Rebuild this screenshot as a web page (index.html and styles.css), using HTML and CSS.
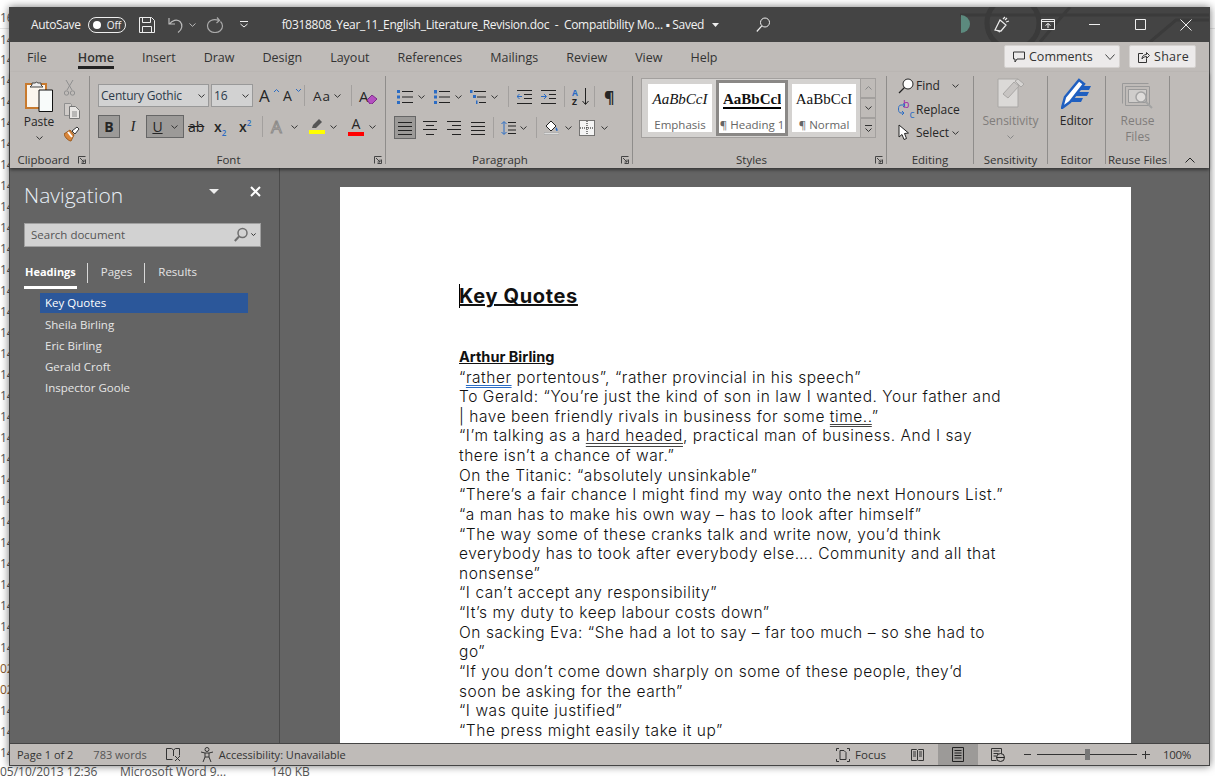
FILE: index.html
```html
<!DOCTYPE html>
<html lang="en">
<head>
    <meta charset="UTF-8">
    <title>f0318808_Year_11_English_Literature_Revision.doc - Word</title>
    <link rel="stylesheet" href="styles.css">
</head>
<body>
<svg class="defs" width="0" height="0">
    <symbol id="chev" viewBox="0 0 7 4"><path d="M.5.500 3.500 3.300 6.500.500" fill="none" stroke="#333" stroke-width="1"/></symbol>
    <symbol id="chev-lt" viewBox="0 0 7 4"><path d="M.5.500 3.500 3.300 6.500.500" fill="none" stroke="#bbb" stroke-width="1"/></symbol>
    <symbol id="launch" viewBox="0 0 8 8"><path d="M.5 7.500V.5h7M7.500 3.500v4h-4M2 2l4 4M6 3.500V6H3.500" fill="none" stroke="#444"/></symbol>
    <symbol id="lines" viewBox="0 0 14 14"><path d="M0 1.500h14M0 5.500h14M0 9.500h14M0 13.500h14" stroke="#222"/></symbol>
</svg>

<!-- the explorer window behind word -->
<div class="backdrop">
    <div class="file-dates">
        <div class="date">16</div><div class="date first">14</div><div class="date">14</div><div class="date">14</div><div class="date">14</div><div class="date">14</div>
        <div class="date">14</div><div class="date">14</div><div class="date">14</div><div class="date">14</div><div class="date">14</div><div class="date">14</div>
        <div class="date">14</div><div class="date">14</div><div class="date">14</div><div class="date">14</div><div class="date">14</div><div class="date">14</div>
        <div class="date">14</div><div class="date">14</div><div class="date">14</div><div class="date">14</div><div class="date">14</div><div class="date">14</div>
        <div class="date">14</div><div class="date">14</div><div class="date">14</div><div class="date">14</div><div class="date">14</div><div class="date">14</div>
        <div class="date">14</div><div class="date old">02</div><div class="date old">02</div><div class="date">14</div><div class="date">14</div><div class="date">14</div>
    </div>
    <div class="file-row">
        <span class="file-when">05/10/2013 12:36</span>
        <span class="file-type">Microsoft Word 9...</span>
        <span class="file-size">140 KB</span>
    </div>
</div>

<div class="window">
    <header class="titlebar">
        <svg class="title-art" width="1200" height="35" viewBox="0 0 1200 35">
            <path d="M950 8h270M1030 35l30-35M1140 35l26-22h40" fill="none" stroke="#3b3b3b" stroke-width="3"/>
            <circle cx="1003" cy="16" r="26" fill="none" stroke="#3a3a3a" stroke-width="5"/>
            <path d="M951 8a9 9 0 0 1 0 18z" fill="#5c8a7e"/>
        </svg>
        <span class="autosave">AutoSave</span>
        <span class="toggle"><i></i>Off</span>
        <svg class="qa-save" width="16" height="16" viewBox="0 0 16 16"><path d="M.5.500h12l3 3v12H.5zM3.500.500v5h8v-5M3.500 15.500v-6h9v6" fill="none" stroke="#eee"/></svg>
        <svg class="qa-undo" width="16" height="16" viewBox="0 0 16 16"><path d="M1 1v6h6M1.500 7C4 3 9 2 12 4.500c3 3 2.500 8-2 11" fill="none" stroke="#bbb" stroke-width="1.200"/></svg>
        <svg class="qa-chev" width="7" height="4"><use href="#chev-lt"/></svg>
        <svg class="qa-redo" width="18" height="16" viewBox="0 0 18 16"><path d="M11 .5l2.500 3-3 2.500M13 3.500C7 1 1.500 4 1.500 9c0 4 3.500 6.500 7.500 6.500S16.500 13 16.500 9c0-2-1-3.500-2-4.500" fill="none" stroke="#aaa" stroke-width="1.200"/></svg>
        <svg class="qa-more" width="8" height="7" viewBox="0 0 8 7"><path d="M0 .5h8M.5 3l3.500 3L7.500 3" fill="none" stroke="#eee"/></svg>
        <span class="doc-title">f0318808_Year_11_English_Literature_Revision.doc&nbsp; - &nbsp;Compatibility Mo... ▪ Saved</span>
        <svg class="doc-chev" width="7" height="4" viewBox="0 0 7 4"><path d="M0 0h7L3.500 4z" fill="#eee"/></svg>
        <svg class="title-search" width="14" height="15" viewBox="0 0 14 15"><circle cx="9" cy="5.500" r="4.500" fill="none" stroke="#eee"/><path d="M5.800 8.800.8 14.500" stroke="#eee" stroke-width="1.200"/></svg>
        <div class="caption">
            <button class="cap-btn"><svg width="16" height="17" viewBox="0 0 16 17"><path d="M1 14 6 4l6 5-5 6zM3 15l3 1M9 3l2-2M12 6l3-1M11 4l2-2" fill="none" stroke="#eee" stroke-width="1.200"/></svg></button>
            <button class="cap-btn"><svg width="14" height="11" viewBox="0 0 14 11"><path d="M.5.500h13v10H.5zM.5 2.500h13M7 9V4.500M4.500 6.500 7 4.500l2.500 2" fill="none" stroke="#eee"/></svg></button>
            <button class="cap-btn"><svg width="11" height="1" viewBox="0 0 11 1"><path d="M0 .5h11" stroke="#eee"/></svg></button>
            <button class="cap-btn"><svg width="11" height="11" viewBox="0 0 11 11"><path d="M.5.500h10v10H.5z" fill="none" stroke="#eee"/></svg></button>
            <button class="cap-btn"><svg width="12" height="12" viewBox="0 0 12 12"><path d="M.5.500l11 11M11.500.500l-11 11" stroke="#eee"/></svg></button>
        </div>
    </header>

    <nav class="tabs">
        <span class="tab">File</span>
        <span class="tab active">Home</span>
        <span class="tab">Insert</span>
        <span class="tab">Draw</span>
        <span class="tab">Design</span>
        <span class="tab">Layout</span>
        <span class="tab">References</span>
        <span class="tab">Mailings</span>
        <span class="tab">Review</span>
        <span class="tab">View</span>
        <span class="tab">Help</span>
        <div class="tab-actions">
            <button class="comments-btn">
                <svg width="12" height="12" viewBox="0 0 12 12"><path d="M.5 1h11v7H4L2 11V8H.5z" fill="none" stroke="#333"/></svg>
                Comments
                <svg class="comments-chev" width="10" height="6" viewBox="0 0 10 6"><path d="M.5.500l4.500 5 4.500-5" fill="none" stroke="#444"/></svg>
            </button>
            <button class="share-btn">
                <svg width="12" height="12" viewBox="0 0 12 12"><path d="M5 2.500H.5v9h8V8M4 8c0-3 2-4.500 4.500-4.500V1.500L11.500 4.500 8.500 7.500V5.500C6.500 5.500 5 6.500 4 8z" fill="none" stroke="#333"/></svg>
                Share
            </button>
        </div>
    </nav>

    <section class="ribbon">
        <div class="group clipboard">
            <div class="group-body clip-body">
                <div class="paste">
                    <svg width="28" height="32" viewBox="0 0 28 32">
                        <path d="M1 4h20v24H1z" fill="#fbf6ee" stroke="#c87a2e" stroke-width="2"/>
                        <path d="M7 5V3h3a2 2 0 0 1 3 0h3v2l2 2H5z" fill="#eee" stroke="#444"/>
                        <path d="M14 10h13.500v21.500H14z" fill="#f8fbfa" stroke="#111"/>
                    </svg>
                    <span class="big-label">Paste</span>
                    <svg class="under-chev" width="7" height="4"><use href="#chev"/></svg>
                </div>
                <div class="clip-tools">
                    <svg width="11" height="16" viewBox="0 0 11 16"><path d="M2 0l6 10M9 0 3 10" stroke="#8f8f8f"/><circle cx="2.500" cy="13" r="2.200" fill="none" stroke="#8f8f8f"/><circle cx="8.500" cy="13" r="2.200" fill="none" stroke="#8f8f8f"/></svg>
                    <svg width="16" height="16" viewBox="0 0 16 16"><path d="M.5.500h6l1 1v11h-7z" fill="#cfcbc8" stroke="#8f8f8f"/><path d="M5.500 3.500h6l4 4v8h-10z" fill="#e8e6e4" stroke="#777"/><path d="M8 9h5M8 11h5M8 13h5" stroke="#888"/></svg>
                    <svg width="16" height="16" viewBox="0 0 16 16"><path d="M0 8l6-4 4 5-3 6C5 15 1 12 0 8z" fill="#d9863a" stroke="#9b5a1e"/><path d="M4 6l4 5" stroke="#fff" stroke-width="2"/><path d="M8 5l5-4 2 2-4 5z" fill="#fff" stroke="#333"/></svg>
                </div>
            </div>
            <div class="group-label clip-label">Clipboard</div>
            <svg class="launcher" width="8" height="8"><use href="#launch"/></svg>
        </div>

        <div class="group font">
            <div class="tool-row">
                <span class="combo font-name">Century Gothic<svg width="7" height="4"><use href="#chev"/></svg></span>
                <span class="combo font-size">16<svg width="7" height="4"><use href="#chev"/></svg></span>
                <span class="glyph-a ml6">A<svg class="tick" width="5" height="3" viewBox="0 0 5 3"><path d="M0 3l2.500-2.500L5 3" fill="none" stroke="#2b6cc4"/></svg></span>
                <span class="glyph-a small-a ml9">A<svg class="tick" width="5" height="3" viewBox="0 0 5 3"><path d="M0 0l2.500 2.500L5 0" fill="none" stroke="#2b6cc4"/></svg></span>
                <i class="sep ml8"></i>
                <span class="aa ml8">Aa<svg width="7" height="4"><use href="#chev"/></svg></span>
                <i class="sep ml10"></i>
                <span class="glyph-a eraser ml7">A<svg class="rub" width="10" height="9" viewBox="0 0 10 9"><path d="M0 5l5-5 5 4-5 5H3z" fill="#b44fc0" stroke="#7d2d88"/></svg></span>
            </div>
            <div class="tool-row row-two">
                <span class="tb on bold">B</span>
                <span class="tb ital ml6">I</span>
                <span class="tb on under ml6"><u>U</u><svg width="7" height="4"><use href="#chev"/></svg></span>
                <span class="strike ml4">ab</span>
                <span class="script ml10">x<sub>2</sub></span>
                <span class="script ml10">x<sup>2</sup></span>
                <i class="sep ml8"></i>
                <span class="glyph-a fx ml8">A</span><svg class="ml5" width="7" height="4"><use href="#chev"/></svg>
                <span class="colour ml11"><svg width="16" height="10" viewBox="0 0 16 10"><path d="M3 9l1-3 6-6 3 3-6 6z" fill="#555"/></svg><b class="bar yellow"></b></span><svg class="ml5" width="7" height="4"><use href="#chev"/></svg>
                <span class="colour letter ml11">A<b class="bar red"></b></span><svg class="ml5" width="7" height="4"><use href="#chev"/></svg>
            </div>
            <div class="group-label">Font</div>
            <svg class="launcher" width="8" height="8"><use href="#launch"/></svg>
        </div>

        <div class="group paragraph">
            <div class="tool-row">
                <svg width="16" height="14" viewBox="0 0 16 14"><path d="M5 1.500h11M5 7h11M5 12.500h11" stroke="#222"/><path d="M0 0h3v3H0zM0 5.500h3v3H0zM0 11h3v3H0z" fill="#2b6cc4"/></svg>
                <svg class="ml5" width="7" height="4"><use href="#chev"/></svg>
                <svg class="ml9" width="16" height="14" viewBox="0 0 16 14"><path d="M5 1.500h11M5 7h11M5 12.500h11" stroke="#222"/><path d="M0 0h3v3.500H0zM0 5.500h3v3H0zM0 11h3v3H0z" fill="#2b6cc4"/></svg>
                <svg class="ml5" width="7" height="4"><use href="#chev"/></svg>
                <svg class="ml8" width="16" height="14" viewBox="0 0 16 14"><path d="M4 1.500h12M7 7h9M9 12.500h7" stroke="#222"/><path d="M0 0h2.500v3H0zM3 5h3v3H3zM6 10.500h1.500V14H6z" fill="#2b6cc4"/></svg>
                <svg class="ml5" width="7" height="4"><use href="#chev"/></svg>
                <i class="sep ml10"></i>
                <svg class="ml8" width="15" height="14" viewBox="0 0 15 14"><path d="M0 .5h15M7 4.500h8M7 8.500h8M0 13.500h15" stroke="#222"/><path d="M5 6.500H0M2.500 4 0 6.500 2.500 9" fill="none" stroke="#2b6cc4"/></svg>
                <svg class="ml9" width="15" height="14" viewBox="0 0 15 14"><path d="M0 .5h15M8 4.500h7M8 8.500h7M0 13.500h15" stroke="#222"/><path d="M0 6.500h5M3 4l2.500 2.500L3 9" fill="none" stroke="#2b6cc4"/></svg>
                <i class="sep ml8"></i>
                <span class="sort ml7"><span class="sort-az"><b>A</b><b class="z">Z</b></span><svg width="7" height="17" viewBox="0 0 7 17"><path d="M3.500 0v16M.5 13l3 3.500 3-3.500" fill="none" stroke="#222"/></svg></span>
                <i class="sep ml5"></i>
                <span class="pilcrow ml9">¶</span>
            </div>
            <div class="tool-row row-two">
                <span class="tb on align ml-3"><svg width="14" height="14"><use href="#lines"/></svg></span>
                <svg class="ml7" width="14" height="14" viewBox="0 0 14 14"><path d="M0 .5h14M3 4.500h8M0 8.500h14M3 13.500h8" stroke="#222"/></svg>
                <svg class="ml10" width="14" height="14" viewBox="0 0 14 14"><path d="M0 .5h14M5 4.500h9M0 8.500h14M5 13.500h9" stroke="#222"/></svg>
                <svg class="ml10" width="14" height="14"><use href="#lines"/></svg>
                <i class="sep ml8"></i>
                <svg class="ml7" width="15" height="14" viewBox="0 0 15 14"><path d="M3 1v12M.5 3 3 .5 5.500 3M.5 11 3 13.500 5.500 11" fill="none" stroke="#2b6cc4"/><path d="M7 1.500h8M7 5h8M7 9h8M7 12.500h8" stroke="#222"/></svg>
                <svg class="ml4" width="7" height="4"><use href="#chev"/></svg>
                <i class="sep ml9"></i>
                <span class="shade ml7"><svg width="15" height="15" viewBox="0 0 15 15"><path d="M2 6l5-5 5 5-5 5z" fill="#fff" stroke="#222"/><path d="M12 7c2 2 2 4 1 4s-2-2-1-4z" fill="#2b6cc4"/><path d="M0 12.500h15v2H0z" fill="#dcdcdc" stroke="#999" stroke-width=".5"/></svg></span>
                <svg class="ml6" width="7" height="4"><use href="#chev"/></svg>
                <svg class="ml7" width="16" height="16" viewBox="0 0 16 16"><path d="M.5.500h15v15H.5z" fill="#f4f4f4" stroke="#111" stroke-dasharray="1 1"/><path d="M8 1v14M1 8h14" stroke="#111" stroke-dasharray="1 1"/></svg>
                <svg class="ml6" width="7" height="4"><use href="#chev"/></svg>
            </div>
            <div class="group-label">Paragraph</div>
            <svg class="launcher" width="8" height="8"><use href="#launch"/></svg>
        </div>

        <div class="group styles">
            <div class="gallery-wrap">
                <div class="gallery">
                    <div class="style-card"><span class="sample emph">AaBbCcI</span><span class="style-name">Emphasis</span></div>
                    <div class="style-card picked"><span class="sample head">AaBbCcl</span><span class="style-name">¶ Heading 1</span></div>
                    <div class="style-card"><span class="sample norm">AaBbCcI</span><span class="style-name">¶ Normal</span></div>
                </div>
                <div class="gallery-scroll">
                    <span class="scroll-btn"><svg width="7" height="4" viewBox="0 0 7 4"><path d="M.5 3.500l3-3 3 3" fill="none" stroke="#888"/></svg></span>
                    <span class="scroll-btn"><svg width="7" height="4"><use href="#chev"/></svg></span>
                    <span class="scroll-btn"><svg width="7" height="7" viewBox="0 0 7 7"><path d="M0 .5h7M.5 3.500l3 3 3-3" fill="none" stroke="#333"/></svg></span>
                </div>
            </div>
            <div class="group-label">Styles</div>
            <svg class="launcher" width="8" height="8"><use href="#launch"/></svg>
        </div>

        <div class="group editing">
            <div class="edit-list">
                <div class="edit-row"><svg width="16" height="16" viewBox="0 0 16 16"><circle cx="10" cy="6" r="5" fill="#fff" stroke="#222"/><path d="M6.500 9.500 1 15" stroke="#222" stroke-width="1.300"/></svg>Find<svg class="find-chev" width="7" height="4"><use href="#chev"/></svg></div>
                <div class="edit-row"><span class="rep"><b class="rep-b">b</b><b class="rep-c">c</b><svg width="10" height="14" viewBox="0 0 10 14"><path d="M7 2H3C1 2 .5 4 .5 6S1 10 3 10h3M5 .5 7 2 5 4M4 8 6 10 4 12" fill="none" stroke="#2b6cc4"/></svg></span>Replace</div>
                <div class="edit-row"><svg class="select-ic" width="14" height="17" viewBox="0 0 14 17"><path d="M1 1v12l3-2.500 2 5 2.500-1-2-5 4-.5z" fill="#fff" stroke="#222"/></svg>Select<svg class="select-chev" width="7" height="4"><use href="#chev"/></svg></div>
            </div>
            <div class="group-label">Editing</div>
        </div>

        <div class="group big sensitivity">
            <div class="big-body">
                <svg width="28" height="30" viewBox="0 0 28 30"><path d="M1 1h20v28H1z" fill="#dbd9d7" stroke="#a9a7a5"/><path d="M6 16 17 4l5 4-11 12z" fill="#c8c5c3" stroke="#a9a7a5"/><path d="M18 3l3-2 6 5-3 3z" fill="#d6d4d2" stroke="#a9a7a5"/></svg>
                <span class="big-label dim">Sensitivity</span>
                <svg class="under-chev" width="7" height="4" viewBox="0 0 7 4"><path d="M.5.500l3 3 3-3" fill="none" stroke="#888"/></svg>
            </div>
            <div class="group-label">Sensitivity</div>
        </div>

        <div class="group big editor">
            <div class="big-body">
                <svg width="31" height="31" viewBox="0 0 31 31"><path d="M1 30 4 19 18 2l5 4L9 24z" fill="#fff" stroke="#1f5fc0" stroke-width="2.500"/><path d="M21 8h9l-2 4h-10zM16 14h12l-2 4H13zM12 20h10l-2 4H8z" fill="#1f5fc0"/></svg>
                <span class="big-label">Editor</span>
            </div>
            <div class="group-label">Editor</div>
        </div>

        <div class="group big reuse">
            <div class="big-body">
                <svg width="31" height="27" viewBox="0 0 31 27"><path d="M.5.500h26M.5.500v20" stroke="#999" fill="none"/><path d="M3.500 3.500h24v19h-24z" fill="none" stroke="#999"/><path d="M6.500 6.500h18v13h-18z" fill="#cfcdcb" stroke="#999"/><circle cx="19" cy="14" r="5" fill="#dedcda" stroke="#a3a3a3" stroke-width="1.500"/><path d="M23 18l7 7" stroke="#a3a3a3" stroke-width="2"/></svg>
                <span class="big-label dim">Reuse<br>Files</span>
            </div>
            <div class="group-label">Reuse Files</div>
        </div>

        <svg class="collapse" width="10" height="6" viewBox="0 0 10 6"><path d="M.5 5.500 5 1l4.500 4.500" fill="none" stroke="#222"/></svg>
    </section>

    <main class="workspace">
        <aside class="nav-pane">
            <div class="nav-head">
                <span class="nav-title">Navigation</span>
                <svg class="nav-drop" width="10" height="5" viewBox="0 0 10 5"><path d="M0 0h10L5 5z" fill="#eee"/></svg>
                <svg class="nav-close" width="11" height="11" viewBox="0 0 11 11"><path d="M1 1l9 9M10 1l-9 9" stroke="#fff" stroke-width="2"/></svg>
            </div>
            <div class="nav-search">
                <span>Search document</span>
                <svg width="14" height="15" viewBox="0 0 14 15"><circle cx="8.500" cy="6" r="4.500" fill="none" stroke="#6e6e6e" stroke-width="1.500"/><path d="M5 9.500.8 14" stroke="#6e6e6e" stroke-width="2"/></svg>
                <svg width="5" height="3" viewBox="0 0 7 4"><path d="M.5.500l3 3 3-3" fill="none" stroke="#333" stroke-width="1.400"/></svg>
            </div>
            <div class="nav-tabs">
                <span class="nav-tab current">Headings</span>
                <span class="nav-tab">Pages</span>
                <span class="nav-tab">Results</span>
            </div>
            <ul class="heading-list">
                <li class="selected">Key Quotes</li>
                <li>Sheila Birling</li>
                <li>Eric Birling</li>
                <li>Gerald Croft</li>
                <li>Inspector Goole</li>
            </ul>
        </aside>

        <div class="doc-area">
            <article class="page">
                <h1 class="doc-h1"><i class="caret"></i>Key Quotes</h1>
                <h2 class="doc-h2">Arthur Birling</h2>
                <p>“<span class="grammar">rather</span> portentous”, “rather provincial in his speech”</p>
                <p>To Gerald: “You’re just the kind of son in law I wanted. Your father and</p>
                <p>| have been friendly rivals in business for some <span class="dbl">time..</span>”</p>
                <p>“I’m talking as a <span class="dbl">hard headed</span>, practical man of business. And I say</p>
                <p>there isn’t a chance of war.”</p>
                <p>On the Titanic: “absolutely unsinkable”</p>
                <p>“There’s a fair chance I might find my way onto the next Honours List.”</p>
                <p>“a man has to make his own way – has to look after himself”</p>
                <p>“The way some of these cranks talk and write now, you’d think</p>
                <p>everybody has to took after everybody else…. Community and all that</p>
                <p>nonsense”</p>
                <p>“I can’t accept any responsibility”</p>
                <p>“It’s my duty to keep labour costs down”</p>
                <p>On sacking Eva: “She had a lot to say – far too much – so she had to</p>
                <p>go”</p>
                <p>“If you don’t come down sharply on some of these people, they’d</p>
                <p>soon be asking for the earth”</p>
                <p>“I was quite justified”</p>
                <p>“The press might easily take it up”</p>
            </article>
        </div>
    </main>

    <footer class="statusbar">
        <span class="st-page">Page 1 of 2</span>
        <span class="st-words">783 words</span>
        <svg class="st-proof" width="15" height="14" viewBox="0 0 15 14"><path d="M.5.500h5l2 1.500 2-1.500h4v7M7.500 2v6M.5.500v11h6" fill="none" stroke="#333"/><path d="M9 8l5 5M14 8l-5 5" stroke="#333"/></svg>
        <svg class="st-a11y" width="16" height="16" viewBox="0 0 16 16"><circle cx="7" cy="2.500" r="2" fill="none" stroke="#333"/><path d="M1 5l4 1h4l4-1M5 6v4l-2 5M9 6v4l2 5M5 10h4" fill="none" stroke="#333"/></svg>
        <span>Accessibility: Unavailable</span>
        <div class="st-right">
            <svg width="14" height="14" viewBox="0 0 14 14"><path d="M3 .5H.5V3M11 .5h2.500V3M.5 11v2.500H3M13.500 11v2.500H11M4 11.500v-9h4l2 2v7z" fill="none" stroke="#333"/></svg>
            <span class="st-focus">Focus</span>
            <svg class="st-read" width="13" height="12" viewBox="0 0 13 12"><path d="M.5.500h5l1 1 1-1h5v11h-5l-1-.5-1 .5h-5zM6.500 1.500V11M2 3h3M2 5h3M2 7h3M8 3h3M8 5h3M8 7h3" fill="none" stroke="#333"/></svg>
            <span class="st-view"><svg width="12" height="15" viewBox="0 0 12 15"><path d="M.5.500h11v14H.5zM2.500 3.500h7M2.500 6h7M2.500 8.500h7M2.500 11h7" fill="none" stroke="#222"/></svg></span>
            <svg class="st-web" width="14" height="14" viewBox="0 0 14 14"><path d="M.5.500h10v7M.5.500v12h5M2.500 3h6M2.500 5.500h5M2.500 8h3" fill="none" stroke="#333"/><circle cx="9.500" cy="9.500" r="4" fill="#bfbbb8" stroke="#222"/><path d="M5.500 9.500h8" stroke="#222"/></svg>
            <span class="zoom-minus"></span>
            <span class="zoom-track"><i class="zoom-thumb"></i></span>
            <span class="zoom-plus"></span>
            <span class="zoom-pct">100%</span>
        </div>
    </footer>
</div>
</body>
</html>
```

FILE: styles.css
```css
* {
    box-sizing: border-box;
}
html, body {
    margin: 0;
    height: 100%;
    overflow: hidden;
}
body {
    position: relative;
    width: 1215px;
    height: 776px;
    background: #fff;
    font-family: "Open Sans", "Liberation Sans", sans-serif;
    font-size: 12px;
    color: #262626;
}
.defs {
    position: absolute;
}
button {
    font: inherit;
    color: inherit;
    background: none;
    border: none;
    padding: 0;
}
svg {
    flex: none;
    display: block;
}

/* desktop behind the window */
.backdrop {
    color: #555;
    font-size: 12px;
}
.file-dates {
    padding-top: 7px;
}
.date {
    height: 21px;
    line-height: 21px;
}
.date.first {
    border-top: 1px solid #e6e6e6;
}
.date.old {
    color: #8a5a2c;
}
.file-row {
    display: flex;
    height: 21px;
    margin-top: -2px;
    line-height: 21px;
    white-space: nowrap;
}
.file-when {
    width: 120px;
}
.file-type {
    width: 151px;
}

/* window */
.window {
    position: absolute;
    left: 9px;
    top: 7px;
    width: 1201px;
    height: 759px;
    display: flex;
    flex-direction: column;
    background: #646464;
    border: 1px solid #444;
    border-top: none;
    box-shadow: 0 0 8px rgba(0,0,0,0.55);
}

/* title bar */
.titlebar {
    position: relative;
    flex: none;
    height: 35px;
    display: flex;
    align-items: center;
    background: #444;
    color: #f2f2f2;
    padding-left: 21px;
    overflow: hidden;
}
.title-art {
    position: absolute;
    left: 0;
    top: 0;
}
.titlebar > span, .titlebar > svg:not(.title-art) {
    position: relative;
}
.autosave {
    font-size: 12px;
    letter-spacing: -0.35px;
}
.toggle {
    display: flex;
    align-items: center;
    width: 38px;
    height: 16px;
    margin-left: 7px;
    padding-left: 4px;
    border: 1px solid #eee;
    border-radius: 9px;
    font-size: 10px;
}
.toggle i {
    width: 8px;
    height: 8px;
    border-radius: 50%;
    background: #fff;
    margin-right: 6px;
}
.qa-save {
    margin-left: 13px;
}
.qa-undo {
    margin-left: 13px;
}
.qa-chev {
    margin-left: 5px;
}
.qa-redo {
    margin-left: 10px;
}
.qa-more {
    margin-left: 16px;
}
.doc-title {
    margin-left: 34px;
    font-size: 12px;
    white-space: nowrap;
    letter-spacing: -0.3px;
}
.doc-chev {
    margin-left: 8px;
}
.title-search {
    margin-left: 37px;
}
.caption {
    position: absolute;
    right: 0;
    top: 0;
    display: flex;
}
.cap-btn {
    width: 46px;
    height: 35px;
    display: flex;
    align-items: center;
    justify-content: center;
}

/* ribbon tabs */
.tabs {
    flex: none;
    height: 30px;
    display: flex;
    align-items: flex-start;
    gap: 28px;
    padding-left: 17px;
    background: #bfbbb8;
    font-size: 12.500px;
    color: #333;
}
.tab {
    height: 27px;
    padding-top: 7px;
}
.tab.active {
    margin-left: 3px;
    font-weight: 600;
    border-bottom: 3px solid #222;
}
.tab-actions {
    margin-left: auto;
    display: flex;
    gap: 9px;
    padding: 3px 13px 0 0;
}
.comments-btn, .share-btn {
    display: flex;
    align-items: center;
    height: 23px;
    padding: 0 8px;
    background: #eceaea;
    border: 1px solid #d5d2d0;
    border-radius: 2px;
    gap: 4px;
    font-size: 12.500px;
}
.comments-btn {
    width: 116px;
}
.comments-chev {
    margin-left: 8px;
}
.share-btn {
    width: 67px;
    letter-spacing: 0.3px;
}

/* ribbon groups */
.ribbon {
    position: relative;
    flex: none;
    height: 96px;
    display: flex;
    padding-top: 4px;
    background: #bfbbb8;
    box-shadow: 0 2px 3px rgba(0,0,0,0.45);
    z-index: 1;
}
.group {
    position: relative;
    height: 88px;
    border-right: 1px solid #8f8d8b;
    display: flex;
    flex-direction: column;
}
.group-label {
    position: absolute;
    left: 0;
    right: 0;
    bottom: -4px;
    height: 17px;
    line-height: 17px;
    text-align: center;
    font-size: 11.500px;
    color: #333;
    white-space: nowrap;
}
.clip-label {
    right: 12px;
}
.font .group-label, .paragraph .group-label {
    right: 18px;
}
.styles .group-label {
    right: 16px;
}
.launcher {
    position: absolute;
    right: 3px;
    bottom: 0;
}
.clipboard {
    width: 80px;
}
.font {
    width: 296px;
    padding: 8px 0 0 8px;
}
.paragraph {
    width: 247px;
    padding: 9px 0 0 11px;
}
.styles {
    width: 254px;
}
.editing {
    width: 87px;
}
.sensitivity {
    width: 74px;
}
.editor {
    width: 58px;
}
.reuse {
    width: 64px;
}
.clip-body {
    display: flex;
    padding-left: 14px;
}
.paste {
    width: 30px;
    display: flex;
    flex-direction: column;
    align-items: center;
    padding-top: 4px;
}
.big-label {
    margin-top: 2px;
    font-size: 12px;
    line-height: 16px;
    text-align: center;
    white-space: nowrap;
}
.big-label.dim {
    color: #7f7d7b;
}
.under-chev {
    margin-top: 6px;
}
.clip-tools {
    margin-left: 10px;
    padding-top: 4px;
    display: flex;
    flex-direction: column;
    align-items: flex-start;
    gap: 7px;
}
.tool-row {
    display: flex;
    align-items: center;
    height: 23px;
}
.row-two {
    margin-top: 8px;
}
.sep {
    display: block;
    width: 1px;
    height: 21px;
    background: #a3a09e;
}
.combo {
    display: flex;
    align-items: center;
    justify-content: space-between;
    height: 23px;
    padding: 0 3px 0 2px;
    background: #d2d2d2;
    border: 1px solid #999;
    font-size: 12px;
    letter-spacing: -0.2px;
    margin-right: 2px;
    color: #2b3a4a;
}
.font-name {
    width: 111px;
}
.font-size {
    width: 42px;
    margin-right: 0;
}
.glyph-a {
    position: relative;
    display: block;
    width: 15px;
    font-size: 17px;
    line-height: 20px;
}
.small-a {
    width: 13px;
    font-size: 14px;
}
.tick {
    position: absolute;
    right: -5px;
    top: 3px;
}
.aa {
    display: flex;
    align-items: center;
    gap: 3px;
    font-size: 13.500px;
    letter-spacing: 1px;
}
.eraser {
    font-size: 15px;
}
.rub {
    position: absolute;
    left: 8px;
    top: 9px;
}
.tb {
    display: flex;
    align-items: center;
    justify-content: center;
    height: 23px;
    font-size: 14px;
}
.tb.on {
    background: #9c9a98;
    border: 1px solid #666;
}
.bold {
    width: 22px;
    font-weight: 700;
}
.ital {
    width: 14px;
    font-style: italic;
    font-family: "Liberation Serif", serif;
    font-size: 15px;
}
.under {
    width: 38px;
    gap: 8px;
}
.strike {
    font-size: 14px;
    text-decoration: line-through;
    width: 16px;
    color: #222;
}
.script {
    width: 15px;
    font-weight: 600;
    font-size: 14px;
    line-height: 16px;
}
.script sub, .script sup {
    font-size: 8px;
    color: #2b6cc4;
    line-height: 0;
}
.fx {
    color: #d8d6d4;
    -webkit-text-stroke: 1px #8c8a88;
}
.colour {
    display: flex;
    flex-direction: column;
    width: 16px;
    align-items: center;
    font-size: 14px;
    line-height: 14px;
}
.bar {
    display: block;
    width: 16px;
    height: 4px;
    margin-top: 1px;
}
.yellow {
    background: #ffff00;
}
.red {
    background: #ff0000;
}
.sort {
    display: flex;
    align-items: center;
    gap: 2px;
}
.sort-az {
    display: flex;
    flex-direction: column;
    font-size: 8.500px;
    line-height: 9px;
    width: 8px;
    color: #2b6cc4;
}
.sort-az .z {
    color: #222;
}
.pilcrow {
    font-size: 16px;
    font-weight: 700;
}
.align {
    width: 22px;
}
.ml-3 { margin-left: -3px; }
.ml3 { margin-left: 3px; }
.ml4 { margin-left: 4px; }
.ml5 { margin-left: 5px; }
.ml6 { margin-left: 6px; }
.ml7 { margin-left: 7px; }
.ml8 { margin-left: 8px; }
.ml9 { margin-left: 9px; }
.ml10 { margin-left: 10px; }
.ml11 { margin-left: 11px; }

/* style gallery */
.gallery-wrap {
    display: flex;
    height: 60px;
    margin: 2px 0 0 8px;
}
.gallery {
    width: 220px;
    display: flex;
    align-items: center;
    gap: 4px;
    padding-left: 6px;
    background: #d4d2d0;
    border: 1px solid #a3a09e;
}
.style-card {
    width: 64px;
    height: 48px;
    background: #fff;
    display: flex;
    flex-direction: column;
    align-items: center;
    overflow: hidden;
}
.style-card.picked {
    width: 72px;
    height: 56px;
    border: 3px solid #8a8886;
    padding-top: 2px;
}
.sample {
    flex: none;
    height: 33px;
    line-height: 30px;
    font-family: "Liberation Serif", serif;
    font-size: 15px;
    color: #111;
    white-space: nowrap;
}
.emph {
    font-style: italic;
}
.head {
    font-weight: 700;
    height: 24px;
    line-height: 28px;
    width: 58px;
    overflow: hidden;
    border-bottom: 2px solid #000;
    margin-bottom: 8px;
}
.style-name {
    flex: none;
    font-size: 11.500px;
    color: #666;
    line-height: 15px;
    white-space: nowrap;
}
.gallery-scroll {
    width: 15px;
    display: flex;
    flex-direction: column;
}
.scroll-btn {
    flex: 1;
    display: flex;
    align-items: center;
    justify-content: center;
    border: 1px solid #a3a09e;
    border-left: none;
}

/* editing */
.edit-list {
    padding: 0 0 0 11px;
    margin-top: -2px;
    display: flex;
    flex-direction: column;
}
.edit-row {
    display: flex;
    align-items: center;
    gap: 2px;
    height: 23.500px;
    font-size: 12px;
}
.rep {
    position: relative;
    display: block;
    width: 16px;
    height: 20px;
}
.rep svg {
    position: absolute;
    top: 4px;
    left: 0;
}
.rep-b, .rep-c {
    position: absolute;
    font-weight: 400;
    font-size: 10.500px;
    line-height: 10px;
}
.rep-b {
    left: 5px;
    top: 0;
    color: #a020a8;
}
.rep-c {
    left: 11.500px;
    top: 10px;
    color: #2b6cc4;
}
.find-chev {
    margin-left: 10px;
}
.select-ic {
    margin-right: 2px;
}
.select-chev {
    margin-left: 1px;
}

/* big buttons */
.big-body {
    display: flex;
    flex-direction: column;
    align-items: center;
    padding-top: 2px;
}
.sensitivity .big-label {
    margin-top: 5px;
}
.editor .big-label {
    margin-top: 4px;
}
.reuse svg {
    margin-top: 5px;
}
.reuse .big-label {
    margin-top: 3px;
}
.collapse {
    position: absolute;
    right: 14px;
    bottom: 5px;
}

/* main */
.workspace {
    flex: 1;
    min-height: 0;
    display: flex;
    background: #646464;
}
.nav-pane {
    flex: none;
    width: 270px;
    border-right: 1px solid #4a4a4a;
    color: #eee;
    padding: 0 0 0 14px;
}
.nav-head {
    position: relative;
    height: 55px;
    padding-top: 12px;
}
.nav-title {
    font-size: 21px;
    font-weight: 300;
    color: #e8f0f8;
    line-height: 30px;
}
.nav-drop {
    position: absolute;
    left: 185px;
    top: 21px;
}
.nav-close {
    position: absolute;
    left: 226px;
    top: 18px;
}
.nav-search {
    display: flex;
    align-items: center;
    width: 237px;
    height: 24px;
    padding: 0 4px 2px 6px;
    background: #d2d2d2;
    border: 1px solid #a0a0a0;
    font-size: 11.500px;
    color: #555;
}
.nav-search span {
    flex: 1;
}
.nav-search svg + svg {
    margin-left: 3px;
}
.nav-tabs {
    display: flex;
    align-items: center;
    margin-top: 14px;
    height: 24px;
    font-size: 11.500px;
}
.nav-tab {
    position: relative;
    padding: 0 12px 0 13px;
    height: 20px;
    line-height: 18px;
    border-left: 1px solid #d8d8d8;
    color: #e4e4e4;
}
.nav-tab.current {
    padding: 0 11px 0 1px;
    border-left: none;
    font-size: 11px;
    font-weight: 700;
    color: #fff;
}
.nav-tab.current::after {
    content: "";
    position: absolute;
    left: 0;
    right: 10px;
    top: 23px;
    height: 3px;
    background: #fff;
}
.heading-list {
    list-style: none;
    margin: 8px 0 0 16px;
    padding: 0;
    width: 208px;
    font-size: 11.500px;
}
.heading-list li {
    height: 21px;
    line-height: 21px;
    padding-left: 5px;
    color: #e6e6e6;
}
.heading-list li.selected {
    height: 20px;
    line-height: 20px;
    margin-bottom: 1px;
    background: #2b579a;
    color: #fff;
}
.doc-area {
    flex: 1;
    min-width: 0;
    overflow: hidden;
    padding: 19px 78px 0 60px;
}
.page {
    height: 100%;
    background: #fff;
    padding: 97px 0 0 119px;
    color: #111;
    font-family: Inter, "Open Sans", sans-serif;
    font-size: 15.500px;
    font-weight: 300;
    letter-spacing: 0.55px;
    line-height: 19.620px;
    overflow: hidden;
    white-space: nowrap;
}
.page p {
    margin: 0;
}
.doc-h1 {
    position: relative;
    margin: 0 0 39px;
    font-size: 20px;
    line-height: 24px;
    letter-spacing: 0.65px;
    text-decoration: underline;
}
.caret {
    position: absolute;
    left: 0;
    top: 0;
    width: 1px;
    height: 24px;
    background: #000;
}
.doc-h2 {
    margin: 0 0 1px;
    font-size: 14.500px;
    line-height: 19.600px;
    font-weight: 700;
    letter-spacing: 0;
    text-decoration: underline;
}
.grammar {
    text-decoration: underline double #2b6cc4;
    text-underline-offset: 2px;
}
.dbl {
    text-decoration: underline double #444;
    text-underline-offset: 2px;
}

/* status bar */
.statusbar {
    flex: none;
    height: 22px;
    display: flex;
    align-items: center;
    padding-left: 7px;
    background: #bfbbb8;
    border-top: 1px solid #444;
    font-size: 11px;
    color: #333;
    white-space: nowrap;
}
.st-words {
    margin-left: 20px;
    color: #555;
}
.st-proof {
    margin-left: 19px;
}
.st-a11y {
    margin: 0 3px 0 19px;
}
.st-right {
    margin-left: auto;
    display: flex;
    align-items: center;
    height: 100%;
}
.st-focus {
    margin-left: 5px;
    font-size: 11.500px;
}
.st-read {
    margin-left: 25px;
}
.st-view {
    display: flex;
    align-items: center;
    justify-content: center;
    width: 40px;
    height: 21px;
    margin-left: 14px;
    background: #9c9a98;
}
.st-web {
    margin-left: 13px;
}
.zoom-minus {
    width: 7px;
    height: 1px;
    margin-left: 19px;
    background: #333;
}
.zoom-track {
    position: relative;
    width: 100px;
    height: 1px;
    margin-left: 6px;
    background: #333;
}
.zoom-thumb {
    position: absolute;
    left: 48px;
    top: -5px;
    width: 5px;
    height: 11px;
    background: #777;
}
.zoom-plus {
    position: relative;
    width: 8px;
    height: 1px;
    margin-left: 5px;
    background: #333;
}
.zoom-plus::after {
    content: "";
    position: absolute;
    left: 3.500px;
    top: -3.500px;
    width: 1px;
    height: 8px;
    background: #333;
}
.zoom-pct {
    margin: 0 18px 0 13px;
    font-size: 11.500px;
    letter-spacing: -0.3px;
}
```
